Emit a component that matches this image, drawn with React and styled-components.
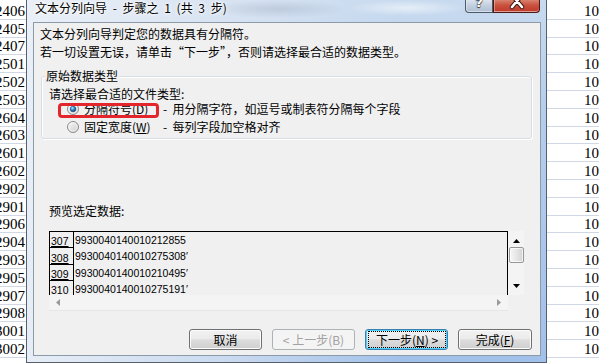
import React from 'react';
import styled, { createGlobalStyle } from 'styled-components';

const GlobalStyle = createGlobalStyle`
  html, body { margin: 0; padding: 0; width: 599px; height: 363px; overflow: hidden; background: #fff; }
  #root { width: 599px; height: 363px; }
  * { box-sizing: border-box; }
`;

const Screen = styled.div`
  display: flex;
  width: 599px;
  height: 363px;
  overflow: hidden;
  background: #fff;
  font-family: "Noto Sans CJK SC", sans-serif;
`;

const Sheet = styled.div`
  flex: 0 0 ${p => p.$width}px;
  height: 363px;
  overflow: hidden;
  background: #fff;
  padding-top: 2px;
`;

const SheetCell = styled.div`
  height: 17.8px;
  border-bottom: 1px solid #d0d7e5;
  display: flex;
  align-items: flex-end;
  justify-content: ${p => (p.$right ? 'flex-end' : 'flex-start')};
  padding: ${p => (p.$right ? '0 1px 0 0' : '0 0 0 37px')};
  font-family: "Liberation Serif", serif;
  font-size: 15px;
  line-height: 16px;
  color: #000;
  white-space: nowrap;
`;

const Dialog = styled.div`
  flex: 0 0 521px;
  height: 363px;
  display: flex;
  flex-direction: column;
  border: 1px solid #55606c;
  border-top: 0;
  padding: 0 5px 6px 6px;
  background:
    radial-gradient(ellipse 70px 9px at 250px 9px, rgba(150, 165, 185, 0.35), transparent),
    radial-gradient(ellipse 60px 8px at 380px 8px, rgba(255, 255, 255, 0.55), transparent),
    linear-gradient(90deg, rgba(238, 242, 248, 0.9) 0%, rgba(226, 233, 243, 0.6) 40%, rgba(200, 220, 242, 0) 72%),
    linear-gradient(180deg, #c8daef 0%, #b4ceec 30%, #a2c1ea 100%);
`;

const TitleBar = styled.div`
  height: 22px;
  flex: 0 0 22px;
  display: flex;
  align-items: flex-start;
  justify-content: space-between;
  padding: 0 1px 0 2px;
`;

const Title = styled.div`
  font-size: 12px;
  line-height: 15px;
  word-spacing: 3px;
  color: #000;
  white-space: nowrap;
  text-shadow: 0 0 6px #fff, 0 0 3px #fff, 0 0 2px #fff;
`;

const CaptionButtons = styled.div`
  display: flex;
`;

const CaptionButton = styled.div`
  width: ${p => p.$w}px;
  height: 13px;
  overflow: hidden;
  border: 1px solid ${p => (p.$close ? '#4a1a12' : '#4b5a6b')};
  border-top: 0;
  border-radius: ${p => (p.$close ? '0 0 4px 0' : '0 0 0 4px')};
  display: flex;
  justify-content: center;
  align-items: flex-start;
  background: ${p =>
    p.$close
      ? 'linear-gradient(180deg, #d9806f 0%, #c9503d 45%, #c0392a 100%)'
      : 'linear-gradient(180deg, #dbe3ee 0%, #c2cfdf 45%, #aebfd3 100%)'};
  box-shadow: inset 0 -1px 0 rgba(255, 255, 255, 0.5), inset 1px 0 0 rgba(255, 255, 255, 0.35);
`;

const HelpGlyph = styled.span`
  font-family: "DejaVu Sans", sans-serif;
  font-weight: bold;
  font-size: 13px;
  line-height: 13px;
  margin-top: -4px;
  color: #fff;
  text-shadow: 0 0 1px #333, 0 0 1px #333, 0 1px 1px #333;
`;

const Panel = styled.div`
  flex: 1;
  background: #f0f0f0;
  border: 1px solid #8d9aa8;
  display: flex;
  flex-direction: column;
  font-size: 12px;
  color: #000;
  padding: 2px 0 5px;
`;

const IntroLine = styled.div`
  padding-left: 6px;
  line-height: 18px;
  height: 18px;
  white-space: nowrap;
`;

const Group = styled.div`
  margin: 15px 8px 0 7px;
  border: 1px solid #d5dfe5;
  border-radius: 3px;
  box-shadow: inset 1px 1px 0 #fff, 1px 1px 0 #fff;
  padding-bottom: 3px;
`;

const GroupLabel = styled.div`
  margin: -9px 0 0 3px;
  padding: 0 1px;
  width: fit-content;
  background: #f0f0f0;
  line-height: 16px;
  height: 16px;
`;

const GroupPrompt = styled.div`
  margin-top: 2px;
  padding-left: 7px;
  line-height: 15px;
  height: 15px;
`;

const RadioRow = styled.div`
  position: relative;
  display: grid;
  grid-template-columns: 12px 74px auto;
  column-gap: 5px;
  align-items: center;
  height: 16px;
  margin-top: ${p => p.$mt || 0}px;
  padding-left: 25px;
  line-height: 16px;
  white-space: nowrap;
`;

const Highlight = styled.div`
  position: absolute;
  left: 16px;
  top: 2px;
  width: 101px;
  height: 15px;
  border: 3px solid #e3262b;
  border-radius: 4px;
  pointer-events: none;
`;

const Desc = styled.span`
  white-space: nowrap;
`;

const PreviewLabel = styled.div`
  margin-top: 64px;
  padding-left: 15px;
  line-height: 16px;
  height: 16px;
`;

const PreviewBox = styled.div`
  margin: 12px 0 0 15px;
  display: grid;
  grid-template-columns: 459px 16px;
  grid-template-rows: 64px 16px;
`;

const DataArea = styled.div`
  border: 1px solid #000;
  border-bottom: 0;
  overflow: hidden;
  background: #f0f0f0;
`;

const DataRow = styled.div`
  display: flex;
  height: 16.33px;
`;

const RowNum = styled.div`
  flex: 0 0 24px;
  border-right: 1px solid #000;
  border-bottom: 1px solid #000;
  padding-left: 1px;
  display: flex;
  align-items: flex-end;
  font-family: "Liberation Sans", sans-serif;
  font-size: 10.5px;
  line-height: 12px;
  text-decoration: underline;
`;

const RowData = styled.div`
  align-self: center;
  padding-left: 1px;
  font-family: "Liberation Sans", sans-serif;
  font-size: 10.5px;
  line-height: 12px;
  white-space: nowrap;
`;

const VScroll = styled.div`
  background: #f4f4f4;
  display: flex;
  flex-direction: column;
  align-items: center;
  padding-top: 6px;
`;

const Thumb = styled.div`
  width: 15px;
  height: 16px;
  margin-top: 3px;
  border: 1px solid #969696;
  border-radius: 2px;
  background: linear-gradient(90deg, #f6f6f6 0%, #e6e6e6 50%, #d3d3d3 100%);
  box-shadow: inset 0 0 0 1px rgba(255, 255, 255, 0.7);
`;

const ArrowSlot = styled.div`
  height: ${p => p.$h || 7}px;
  display: flex;
  align-items: center;
  justify-content: center;
  margin-top: ${p => p.$mt || 0}px;
`;

const HScroll = styled.div`
  background: #f4f4f4;
  border-bottom: 1px solid #e6e6e6;
  display: flex;
  align-items: center;
  justify-content: space-between;
  padding: 0 7px;
`;

const Corner = styled.div`
  background: #f0f0f0;
`;

const ButtonBar = styled.div`
  margin-top: 18px;
  display: flex;
  justify-content: flex-end;
  gap: 10px;
  padding-right: 8px;
`;

const Button = styled.div`
  width: ${p => p.$w}px;
  height: 21px;
  border: 1px solid ${p => (p.$disabled ? '#adb2b5' : p.$default ? '#3c7fb1' : '#707070')};
  border-radius: 3px;
  background: ${p =>
    p.$disabled ? '#f4f4f4' : 'linear-gradient(180deg, #f2f2f2 0%, #ebebeb 45%, #dddddd 52%, #cfcfcf 100%)'};
  box-shadow: inset 0 0 0 1px ${p => (p.$default ? '#4fd2fb' : p.$disabled ? '#f4f4f4' : '#fcfcfc')};
  color: ${p => (p.$disabled ? '#a2a2a2' : '#000')};
  display: flex;
  align-items: center;
  justify-content: center;
  font-size: 12px;
  line-height: 15px;
  white-space: nowrap;
`;

const FocusRect = styled.span`
  flex: 1;
  align-self: stretch;
  margin: 1px 1px 1px 2px;
  border: 1px dotted #000;
  display: flex;
  align-items: center;
  justify-content: center;
`;

const leftNums = ['2406', '2405', '2407', '2501', '2502', '2503', '2604', '2603', '2601', '2602', '2902', '2901', '2906', '2904', '2903', '2905', '2907', '2908', '3001', '3002'];

const previewRows = [
  ['307', '9930040140010212855'],
  ['308', '9930040140010275308′'],
  ['309', '9930040140010210495′'],
  ['310', '9930040140010275191′'],
];

function Radio({ checked, id }) {
  return (
    <svg width="12" height="12" viewBox="0 0 12 12">
      <defs>
        <linearGradient id={`${id}o`} x1="0" y1="0" x2="1" y2="1">
          <stop offset="0" stopColor="#fafafa" />
          <stop offset="1" stopColor="#cbcbcb" />
        </linearGradient>
        <radialGradient id={`${id}d`} cx="0.38" cy="0.32" r="0.7">
          <stop offset="0" stopColor="#bdefff" />
          <stop offset="0.45" stopColor="#3a97dc" />
          <stop offset="1" stopColor="#0c3c74" />
        </radialGradient>
      </defs>
      <circle cx="6" cy="6" r="5.5" fill={`url(#${id}o)`} stroke="#8a8a8a" />
      <circle cx="6" cy="6" r="4.2" fill="none" stroke="#ffffff" strokeOpacity="0.7" strokeWidth="0.8" />
      {checked && <circle cx="6" cy="6" r="2.8" fill={`url(#${id}d)`} stroke="#173f6f" strokeWidth="0.6" />}
    </svg>
  );
}

function Tri({ dir, color = '#000' }) {
  const pts = {
    up: '0,4 3.5,0 7,4',
    down: '0,0 3.5,4 7,0',
    left: '4,0 0,3.5 4,7',
    right: '0,0 4,3.5 0,7',
  }[dir];
  const vertical = dir === 'up' || dir === 'down';
  return (
    <svg width={vertical ? 7 : 4} height={vertical ? 4 : 7} viewBox={vertical ? '0 0 7 4' : '0 0 4 7'}>
      <polygon points={pts} fill={color} />
    </svg>
  );
}

function CloseGlyph() {
  return (
    <svg width="16" height="12" viewBox="0 0 16 12" style={{ display: 'block' }}>
      <path d="M3 -5 L13 7 M13 -5 L3 7" stroke="#3a1510" strokeWidth="4.4" strokeLinecap="round" />
      <path d="M3 -5 L13 7 M13 -5 L3 7" stroke="#ffffff" strokeWidth="2.6" strokeLinecap="round" />
    </svg>
  );
}

export default function App() {
  return (
    <>
      <GlobalStyle />
      <Screen lang="zh-CN">
        <Sheet $width={26}>
          {leftNums.map(n => (
            <SheetCell key={n} $right>{n}</SheetCell>
          ))}
        </Sheet>

        <Dialog>
          <TitleBar>
            <Title>文本分列向导 - 步骤之 1 (共 3 步)</Title>
            <CaptionButtons>
              <CaptionButton $w={28}>
                <HelpGlyph>?</HelpGlyph>
              </CaptionButton>
              <CaptionButton $w={47} $close>
                <CloseGlyph />
              </CaptionButton>
            </CaptionButtons>
          </TitleBar>

          <Panel>
            <IntroLine>文本分列向导判定您的数据具有分隔符。</IntroLine>
            <IntroLine>若一切设置无误，请单击“下一步”，否则请选择最合适的数据类型。</IntroLine>

            <Group>
              <GroupLabel>原始数据类型</GroupLabel>
              <GroupPrompt>请选择最合适的文件类型:</GroupPrompt>
              <RadioRow>
                <Radio checked id="r1" />
                <span>分隔符号(<u>D</u>)</span>
                <Desc>-&nbsp;&nbsp;用分隔字符，如逗号或制表符分隔每个字段</Desc>
                <Highlight />
              </RadioRow>
              <RadioRow $mt={2}>
                <Radio id="r2" />
                <span>固定宽度(<u>W</u>)</span>
                <Desc>-&nbsp;&nbsp;每列字段加空格对齐</Desc>
              </RadioRow>
            </Group>

            <PreviewLabel>预览选定数据:</PreviewLabel>
            <PreviewBox>
              <DataArea>
                {previewRows.map(([n, v]) => (
                  <DataRow key={n}>
                    <RowNum>{n}</RowNum>
                    <RowData>{v}</RowData>
                  </DataRow>
                ))}
              </DataArea>
              <VScroll>
                <ArrowSlot><Tri dir="up" /></ArrowSlot>
                <Thumb />
                <ArrowSlot $mt={19}><Tri dir="down" /></ArrowSlot>
              </VScroll>
              <HScroll>
                <Tri dir="left" color="#9a9a9a" />
                <Tri dir="right" color="#9a9a9a" />
              </HScroll>
              <Corner />
            </PreviewBox>

            <ButtonBar>
              <Button $w={73}>取消</Button>
              <Button $w={83} $disabled>&lt; 上一步(B)</Button>
              <Button $w={83} $default>
                <FocusRect>下一步(<u>N</u>) &gt;</FocusRect>
              </Button>
              <Button $w={74}>完成(<u>F</u>)</Button>
            </ButtonBar>
          </Panel>
        </Dialog>

        <Sheet $width={52}>
          {leftNums.map(n => (
            <SheetCell key={n}>10</SheetCell>
          ))}
        </Sheet>
      </Screen>
    </>
  );
}
